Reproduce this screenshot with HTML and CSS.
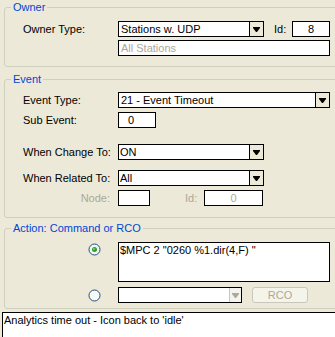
FILE: index.html
```html
<!DOCTYPE html>
<html lang="en">
<head>
  <meta charset="UTF-8">
  <title>Event Action</title>
  <link rel="stylesheet" href="styles.css">
</head>
<body>

<!-- Owner -->
<fieldset class="group owner">
  <legend>Owner</legend>
  <div class="row">
    <span class="label">Owner Type:</span>
    <div class="combo w146">
      <span class="value">Stations w. UDP</span>
      <span class="drop"><svg width="7" height="5" viewBox="0 0 7 5"><path d="M0 0h7v1l-3 4h-1l-3-4z"/></svg></span>
    </div>
    <span class="id-label">Id:</span>
    <div class="box w38 center">8</div>
  </div>
  <div class="row gap3">
    <div class="box w212 indent disabled">All Stations</div>
  </div>
</fieldset>

<!-- Event -->
<fieldset class="group event">
  <legend>Event</legend>
  <div class="row">
    <span class="label">Event Type:</span>
    <div class="combo w212">
      <span class="value">21 - Event Timeout</span>
      <span class="drop"><svg width="7" height="5" viewBox="0 0 7 5"><path d="M0 0h7v1l-3 4h-1l-3-4z"/></svg></span>
    </div>
  </div>
  <div class="row gap4">
    <span class="label">Sub Event:</span>
    <div class="box w38 pad9">0</div>
  </div>
  <div class="row gap16">
    <span class="label">When Change To:</span>
    <div class="combo w146">
      <span class="value tight">ON</span>
      <span class="drop"><svg width="7" height="5" viewBox="0 0 7 5"><path d="M0 0h7v1l-3 4h-1l-3-4z"/></svg></span>
    </div>
  </div>
  <div class="row gap10">
    <span class="label">When Related To:</span>
    <div class="combo w146">
      <span class="value tight">All</span>
      <span class="drop"><svg width="7" height="5" viewBox="0 0 7 5"><path d="M0 0h7v1l-3 4h-1l-3-4z"/></svg></span>
    </div>
  </div>
  <div class="row gap4">
    <span class="label right muted">Node:</span>
    <div class="box w32"></div>
    <span class="label-id muted">Id:</span>
    <div class="box w59 center muted">0</div>
  </div>
</fieldset>

<!-- Action -->
<fieldset class="group action">
  <legend>Action: Command or RCO</legend>
  <div class="row top">
    <span class="radio-cell">
      <svg class="radio" width="13" height="13" viewBox="0 0 13 13">
        <circle cx="6.5" cy="6.5" r="5.5" fill="#f4f4f0" stroke="#1c5180"/>
        <circle cx="6.5" cy="6.5" r="2.5" fill="#2ba12b"/>
        <circle cx="6" cy="6" r="1" fill="#7fd77f"/>
      </svg>
    </span>
    <div class="box w212 tall">$MPC 2 "0260 %1.dir(4,F) "</div>
  </div>
  <div class="row gap5">
    <span class="radio-cell">
      <svg class="radio" width="13" height="13" viewBox="0 0 13 13">
        <circle cx="6.5" cy="6.5" r="5.5" fill="#f8f8f4" stroke="#1c5180"/>
      </svg>
    </span>
    <div class="combo w124 off">
      <span class="value"></span>
      <span class="drop"><svg width="7" height="5" viewBox="0 0 7 5"><path d="M0 0h7v1l-3 4h-1l-3-4z"/></svg></span>
    </div>
    <button class="rco" disabled>RCO</button>
  </div>
</fieldset>

<!-- Description -->
<div class="notes">Analytics time out - Icon back to 'idle'</div>

</body>
</html>
```

FILE: styles.css
```css
html, body {
  margin: 0;
  height: 100%;
  overflow: hidden;
}

body {
  background-color: #ece9d8;
  font-family: "Liberation Sans", Arial, sans-serif;
  font-size: 11px;
  color: #000;
}

.group {
  width: 360px;
  margin: 0 0 0 4px;
  padding: 7px 0 10px 6px;
  border: 1px solid #d0d0bf;
  border-radius: 3px;
  box-sizing: content-box;
}

.group legend {
  padding: 0 2px;
  line-height: 13px;
  color: #0046d5;
}

.owner {
  margin-top: 1px;
}

.event {
  margin-top: 6px;
  padding-top: 6px;
  padding-bottom: 11px;
}

.action {
  margin-top: 4px;
  padding-bottom: 5px;
}

.row {
  display: flex;
  align-items: center;
  height: 16px;
  padding-left: 12px;
}

.row.top {
  align-items: flex-start;
  height: 40px;
}

.gap3 { margin-top: 3px; }
.gap4 { margin-top: 4px; }
.gap5 { margin-top: 5px; }
.gap10 { margin-top: 10px; }
.gap16 { margin-top: 16px; }

.label {
  width: 95px;
  flex: none;
  line-height: 16px;
  white-space: nowrap;
}

.label.right {
  text-align: right;
  padding-right: 8px;
  width: 87px;
}

.muted {
  color: #aca899;
}

.id-label {
  width: 18px;
  margin-left: 10px;
}

.label-id {
  width: 19px;
  margin-left: 35px;
}

.box {
  height: 16px;
  box-sizing: border-box;
  border: 1px solid #000;
  background-color: #fff;
  line-height: 14px;
  padding: 0 2px;
  white-space: nowrap;
  overflow: hidden;
}

.box.center { text-align: center; }
.box.pad9 { padding-left: 9px; }
.box.indent { margin-left: 95px; }
.box.disabled { color: #aca899; }

.box.tall {
  height: 40px;
  padding: 0 1px;
  line-height: 14px;
}

.w32 { width: 32px; }
.w38 { width: 38px; }
.w59 { width: 59px; }
.w124 { width: 124px; }
.w146 { width: 146px; }
.w212 { width: 212px; }

.combo {
  display: flex;
  height: 16px;
  box-sizing: border-box;
  border: 1px solid #000;
  background-color: #fff;
}

.combo .value {
  flex: 1;
  line-height: 14px;
  padding-left: 2px;
  white-space: nowrap;
  overflow: hidden;
}

.combo .value.tight {
  padding-left: 1px;
}

.combo .drop {
  width: 14px;
  flex: none;
  display: flex;
  align-items: center;
  justify-content: center;
  border-left: 1px solid #000;
  background-color: #ece9d8;
  box-sizing: border-box;
}

.combo .drop svg {
  fill: #000;
}

.combo.off .drop {
  border-left-color: #c9c7ba;
  background-color: #f4f3ee;
  width: 12px;
}

.combo.off .drop svg {
  fill: #aca899;
}

.radio-cell {
  width: 95px;
  flex: none;
  display: flex;
  justify-content: flex-end;
  padding-right: 17px;
  box-sizing: border-box;
}

.row.top .radio-cell {
  margin-top: 1px;
}

.radio {
  display: block;
}

.rco {
  width: 56px;
  height: 16px;
  margin-left: 10px;
  padding: 0;
  border: 1px solid #c9c7ba;
  border-radius: 3px;
  background-color: #f5f4ea;
  color: #aca899;
  font-family: "Liberation Sans", Arial, sans-serif;
  font-size: 11px;
  line-height: 14px;
}

.notes {
  margin: 3px 0 0 2px;
  width: 400px;
  height: 60px;
  border: 1px solid #000;
  background-color: #fff;
  padding: 1px 1px;
  line-height: 13px;
}
```
